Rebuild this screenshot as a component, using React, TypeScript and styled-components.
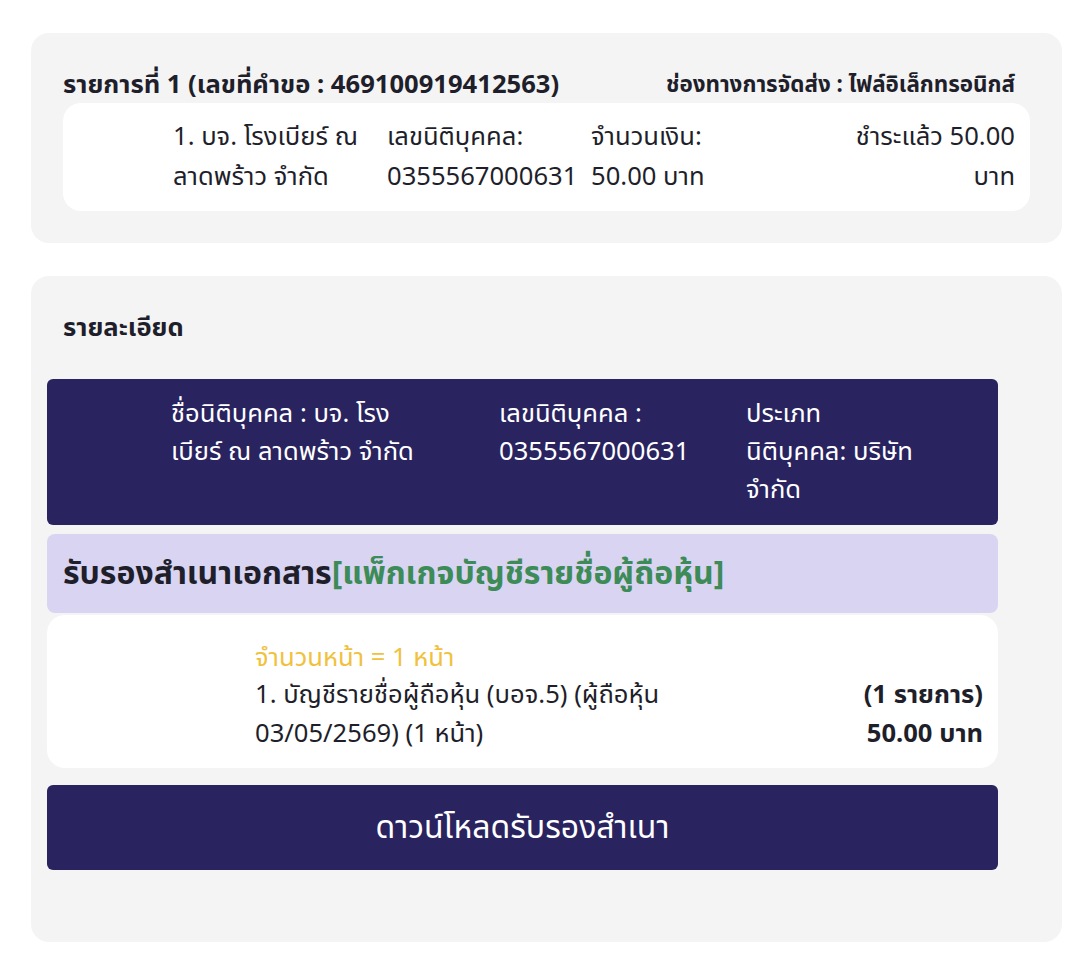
import * as React from 'react';
import styled, {createGlobalStyle} from "styled-components";

const GlobalStyle = createGlobalStyle`
  body {
    margin: 0;
    background: #ffffff;
    font-family: "Noto Sans", "Noto Sans Thai", "Noto Sans Thai UI", sans-serif;
    color: #1f1f2b;
  }
`;

interface ICellProps {
    $align?: 'left' | 'right';
    $max?: number;
}

const App = () => {
    return (
        <Page>
            <GlobalStyle/>
            <Card>
                <OrderHead>
                    <OrderTitle>รายการที่ 1 (เลขที่คำขอ : 469100919412563)</OrderTitle>
                    <Channel>ช่องทางการจัดส่ง : ไฟล์อิเล็กทรอนิกส์</Channel>
                </OrderHead>
                <OrderRow>
                    <Cell>1. บจ. โรงเบียร์ ณ ลาดพร้าว จำกัด</Cell>
                    <Cell>เลขนิติบุคคล: 0355567000631</Cell>
                    <Cell $max={150}>จำนวนเงิน: 50.00 บาท</Cell>
                    <Cell $align="right" $max={190}>ชำระแล้ว 50.00 บาท</Cell>
                </OrderRow>
            </Card>

            <Card $tall>
                <SectionTitle>รายละเอียด</SectionTitle>
                <Stack>
                    <CompanyBar>
                        <Cell $max={262}>ชื่อนิติบุคคล : บจ. โรงเบียร์ ณ ลาดพร้าว จำกัด</Cell>
                        <Cell>เลขนิติบุคคล : 0355567000631</Cell>
                        <Cell>ประเภทนิติบุคคล: บริษัท จำกัด</Cell>
                    </CompanyBar>
                    <ServiceBar>
                        รับรองสำเนาเอกสาร<Package>[แพ็กเกจบัญชีรายชื่อผู้ถือหุ้น]</Package>
                    </ServiceBar>
                    <DocBox>
                        <PageCount>จำนวนหน้า = 1 หน้า</PageCount>
                        <DocRow>
                            <DocName>1. บัญชีรายชื่อผู้ถือหุ้น (บอจ.5) (ผู้ถือหุ้น 03/05/2569) (1 หน้า)</DocName>
                            <DocPrice>
                                <span>(1 รายการ)</span>
                                <span>50.00 บาท</span>
                            </DocPrice>
                        </DocRow>
                    </DocBox>
                    <DownloadButton>ดาวน์โหลดรับรองสำเนา</DownloadButton>
                </Stack>
            </Card>
        </Page>
    );
};

const Page = styled.div`
  display: flex;
  flex-direction: column;
  gap: 33px;
  padding: 33px 30px 26px 31px;
`;

const Card = styled.div<{ $tall?: boolean }>`
  background: #f4f4f5;
  border-radius: 18px;
  padding: ${p => p.$tall ? '30px 64px 72px 16px' : '34px 32px 32px 32px'};
`;

const OrderHead = styled.div`
  display: flex;
  justify-content: space-between;
  align-items: center;
  height: 36px;
`;

const OrderTitle = styled.div`
  font-size: 25.6px;
  font-weight: 700;
`;

const Channel = styled.div`
  font-size: 22.4px;
  font-weight: 700;
  padding-right: 15px;
`;

const OrderRow = styled.div`
  display: grid;
  grid-template-columns: 200px 190px 1fr 1fr;
  column-gap: 14px;
  background: #ffffff;
  border-radius: 18px;
  padding: 13px 15px 15px 110px;
  font-size: 25.6px;
  line-height: 40px;
`;

const Cell = styled.div<ICellProps>`
  text-align: ${p => p.$align || 'left'};
  justify-self: ${p => p.$align === 'right' ? 'end' : 'start'};
  max-width: ${p => p.$max ? `${p.$max}px` : 'none'};
`;

const SectionTitle = styled.div`
  font-size: 25.6px;
  font-weight: 700;
  line-height: 42px;
  padding: 0 16px;
  margin-bottom: 31px;
`;

const Stack = styled.div`
  display: flex;
  flex-direction: column;
`;

const CompanyBar = styled.div`
  display: grid;
  grid-template-columns: 328px 247px 170px;
  background: #29235f;
  color: #ffffff;
  border-radius: 6px;
  padding: 15px 16px 17px 124px;
  font-size: 25.6px;
  line-height: 38px;
`;

const ServiceBar = styled.div`
  margin-top: 9px;
  background: #d8d4f2;
  border-radius: 8px;
  padding: 0 16px;
  height: 79px;
  display: flex;
  align-items: center;
  font-size: 32px;
  font-weight: 700;
`;

const Package = styled.span`
  color: #3d8b57;
`;

const DocBox = styled.div`
  margin-top: 2px;
  background: #ffffff;
  border-radius: 18px;
  padding: 24px 15px 16px 208px;
  font-size: 25.6px;
  line-height: 39px;
`;

const PageCount = styled.div`
  color: #f1c13e;
  line-height: 35px;
`;

const DocRow = styled.div`
  display: flex;
  justify-content: space-between;
  gap: 20px;
`;

const DocName = styled.div`
  width: 460px;
`;

const DocPrice = styled.div`
  display: flex;
  flex-direction: column;
  align-items: flex-end;
  font-weight: 700;
`;

const DownloadButton = styled.button`
  margin-top: 17px;
  height: 85px;
  border: none;
  border-radius: 6px;
  background: #29235f;
  color: #ffffff;
  font-family: inherit;
  font-size: 32px;
  cursor: pointer;
`;

export default App;
